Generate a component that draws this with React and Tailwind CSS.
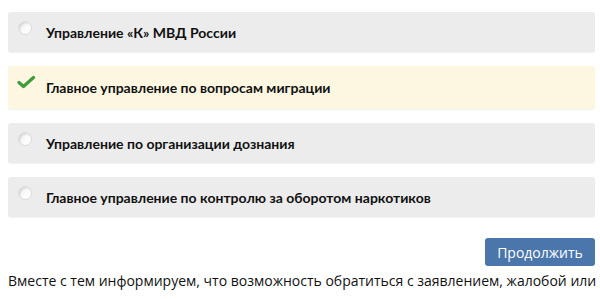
import { useState } from "react";

const options = [
  "Управление «К» МВД России",
  "Главное управление по вопросам миграции",
  "Управление по организации дознания",
  "Главное управление по контролю за оборотом наркотиков",
];

function Radio() {
  return (
    <span className="ml-[1px] mt-[9px] block h-[14px] w-[14px] shrink-0 rounded-full border border-[#dcdcdc] bg-gradient-to-br from-[#e6e6e6] via-[#fafafa] to-white shadow-[inset_1px_1px_2px_rgba(0,0,0,0.12)]" />
  );
}

function Check() {
  return (
    <svg width="19" height="15" viewBox="0 0 19 15" className="mt-[9px] shrink-0">
      <path d="M2 7.5 L6.5 11.5 L16.5 2.5" fill="none" stroke="#3f9a3a" strokeWidth="3.2" strokeLinecap="round" strokeLinejoin="round" />
    </svg>
  );
}

export default function App() {
  const [selected, setSelected] = useState(1);

  return (
    <div className="h-[299px] w-[600px] overflow-hidden bg-white font-['Open_Sans',sans-serif] text-[#111]">
      <div className="flex flex-col gap-[14px] pl-2 pr-[5px] pt-3">
        {options.map((label, i) => {
          const active = i === selected;
          return (
            <button
              key={label}
              onClick={() => setSelected(i)}
              className={
                "flex items-center gap-[7px] rounded-[3px] pl-[9px] text-left font-['Lato',sans-serif] text-[14px] font-bold shadow-[0_1px_1px_rgba(0,0,0,0.06)] " +
                (active ? "h-[43px] bg-[#fdf7e2]" : "h-[40px] bg-[#ececec]")
              }
            >
              <span className="flex h-full w-[22px] items-start">{active ? <Check /> : <Radio />}</span>
              <span>{label}</span>
            </button>
          );
        })}
      </div>
      <div className="flex justify-end pr-[5px] pt-[21px]">
        <button className="h-[28px] w-[110px] rounded-[3px] bg-[#4a76ab] text-[14px] text-white">
          Продолжить
        </button>
      </div>
      <p className="pl-2 pt-[5px] text-[14px] leading-[20px]">
        Вместе с тем информируем, что возможность обратиться с заявлением, жалобой или
      </p>
    </div>
  );
}
